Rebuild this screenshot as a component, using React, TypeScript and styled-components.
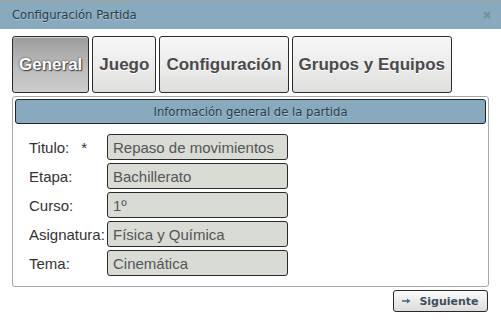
import styled, { createGlobalStyle } from 'styled-components';

const GlobalStyle = createGlobalStyle`
  html, body {
    margin: 0;
    padding: 0;
    background: #ffffff;
  }
`;

const tabs = ['General', 'Juego', 'Configuración', 'Grupos y Equipos'];

const fields = [
  { label: 'Titulo:', required: true, value: 'Repaso de movimientos' },
  { label: 'Etapa:', value: 'Bachillerato' },
  { label: 'Curso:', value: '1º' },
  { label: 'Asignatura:', value: 'Física y Química' },
  { label: 'Tema:', value: 'Cinemática' },
];

export default function App() {
  return (
    <>
      <GlobalStyle />
      <StyledDialog>
        <StyledTitleBar>
          <StyledTitle>Configuración Partida</StyledTitle>
          <StyledClose aria-label="cerrar">
            <svg width="8" height="8" viewBox="0 0 8 8">
              <path d="M1 1 L7 7 M7 1 L1 7" stroke="#7d8a92" strokeWidth="2" />
            </svg>
          </StyledClose>
        </StyledTitleBar>

        <StyledTabRow>
          {tabs.map((tab, idx) => (
            <StyledTab key={tab} $active={idx === 0}>
              {tab}
            </StyledTab>
          ))}
        </StyledTabRow>

        <StyledPanel>
          <StyledPanelHeader>Información general de la partida</StyledPanelHeader>
          <StyledForm>
            {fields.map((field) => (
              <StyledRow key={field.label}>
                <StyledLabel>
                  {field.label}
                  {field.required && <StyledStar>*</StyledStar>}
                </StyledLabel>
                <StyledInput>{field.value}</StyledInput>
              </StyledRow>
            ))}
          </StyledForm>
        </StyledPanel>

        <StyledFooter>
          <StyledNextButton>
            <svg width="9" height="6" viewBox="0 0 9 6">
              <path d="M0 3 H6" stroke="#4d6a80" strokeWidth="1.6" />
              <path d="M5 0.5 L8.5 3 L5 5.5 Z" fill="#4d6a80" />
            </svg>
            Siguiente
          </StyledNextButton>
        </StyledFooter>
      </StyledDialog>
    </>
  );
}

const StyledDialog = styled.div`
  width: 501px;
  height: 322px;
  background: #ffffff;
  display: flex;
  flex-direction: column;
  overflow: hidden;
`;

const StyledTitleBar = styled.div`
  height: 28px;
  border-top: 1px solid #a9a49a;
  background: #87aabf;
  display: flex;
  align-items: center;
  justify-content: space-between;
  padding: 0 10px 0 12px;
  flex-shrink: 0;
`;

const StyledTitle = styled.div`
  font-family: 'DejaVu Sans', Verdana, sans-serif;
  font-size: 11.6px;
  color: #2b3a44;
  text-shadow: 0 1px 0 rgba(255, 255, 255, 0.35);
`;

const StyledClose = styled.div`
  display: flex;
  align-items: center;
  margin-top: -1px;
  opacity: 0.9;
`;

const StyledTabRow = styled.div`
  display: flex;
  gap: 3px;
  padding: 7px 0 0 12px;
  height: 57px;
  flex-shrink: 0;
`;

const StyledTab = styled.div<{ $active?: boolean }>`
  height: 55px;
  padding: 0 6px;
  border: 1px solid #2c2c2c;
  border-radius: 3px;
  display: flex;
  align-items: center;
  font-family: 'Liberation Sans', Arial, sans-serif;
  font-size: 17px;
  font-weight: bold;
  color: ${({ $active }) => ($active ? '#ffffff' : '#4a4a4a')};
  text-shadow: ${({ $active }) => ($active ? '0 0 2px #333, 1px 1px 1px #444' : '0 1px 0 #ffffff')};
  background: ${({ $active }) =>
    $active
      ? 'linear-gradient(#9c9c9c, #bcbcbc 55%, #cdcdcd)'
      : 'linear-gradient(#f7f7f7, #ececec 50%, #dedfdc)'};
  box-shadow: inset 0 1px 0 rgba(255, 255, 255, 0.5);
`;

const StyledPanel = styled.div`
  margin: 3px 0 0 12px;
  width: 471px;
  height: 187px;
  border: 1px solid #a8a8a8;
  border-radius: 3px;
  padding: 2px 2px 0 2px;
  flex-shrink: 0;
`;

const StyledPanelHeader = styled.div`
  height: 23px;
  border: 1px solid #222;
  border-radius: 3px;
  background: #87aabf;
  display: flex;
  align-items: center;
  justify-content: center;
  font-family: 'DejaVu Sans', Verdana, sans-serif;
  font-size: 11.6px;
  color: #2b3a44;
  text-shadow: 0 1px 0 rgba(255, 255, 255, 0.35);
`;

const StyledForm = styled.div`
  display: flex;
  flex-direction: column;
  gap: 3px;
  padding: 10px 0 0 14px;
`;

const StyledRow = styled.div`
  display: flex;
  align-items: center;
  height: 26px;
`;

const StyledLabel = styled.div`
  width: 78px;
  font-family: 'Liberation Sans', Arial, sans-serif;
  font-size: 15px;
  color: #333333;
  display: flex;
`;

const StyledStar = styled.span`
  margin-left: 12px;
`;

const StyledInput = styled.div`
  width: 174px;
  height: 24px;
  border: 1px solid #2a2a2a;
  border-radius: 3px;
  background: #d9dbd5;
  display: flex;
  align-items: center;
  padding-left: 5px;
  font-family: 'Liberation Sans', Arial, sans-serif;
  font-size: 15px;
  color: #555555;
`;

const StyledFooter = styled.div`
  display: flex;
  justify-content: flex-end;
  padding: 3px 13px 0 0;
`;

const StyledNextButton = styled.div`
  width: 93px;
  height: 20px;
  border: 1px solid #2a2a2a;
  border-radius: 3px;
  background: linear-gradient(#fbfbfb, #e8e8e8 60%, #dcdcdc);
  display: flex;
  align-items: center;
  justify-content: center;
  gap: 8px;
  font-family: 'DejaVu Sans', Verdana, sans-serif;
  font-size: 11px;
  font-weight: bold;
  color: #3d4f5c;
`;
